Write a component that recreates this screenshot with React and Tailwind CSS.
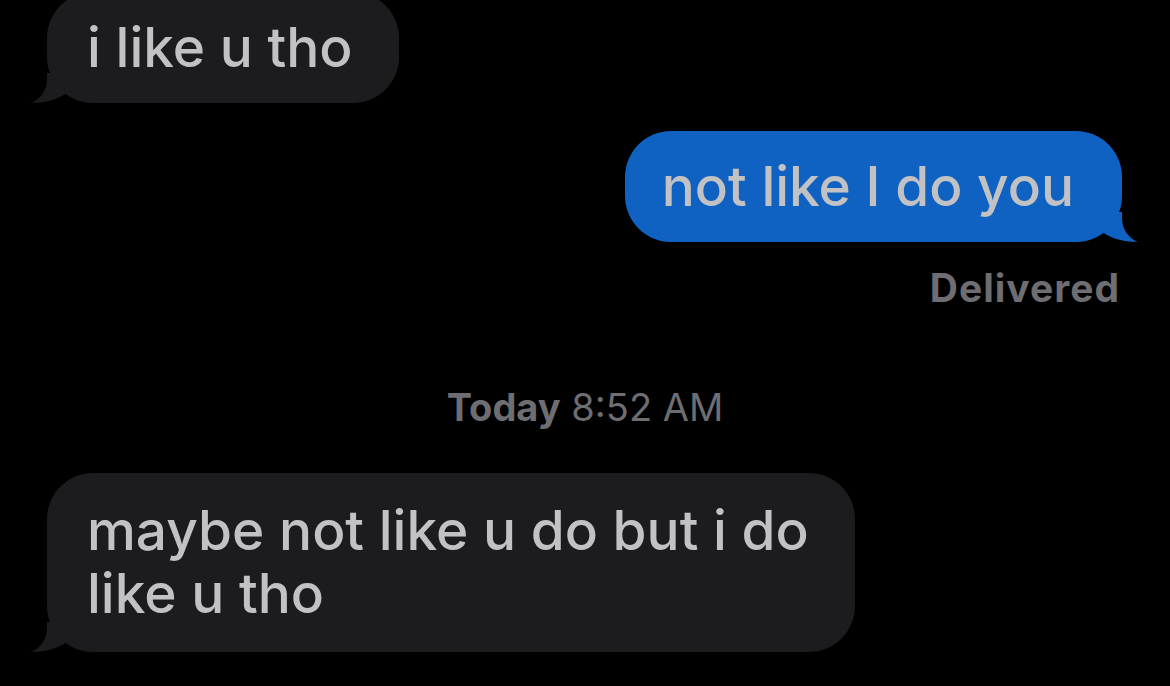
import React from 'react'

function Tail({ color, flip }) {
  return (
    <svg
      className={`absolute bottom-0 h-[30px] w-[40px] ${flip ? 'right-[-16px] scale-x-[-1]' : 'left-[-16px]'}`}
      viewBox="0 0 40 30"
    >
      <path d="M16 0 L16 6 C16 18 9 26 0.5 29.8 C12 30.2 26 27 35 20.5 L35 0 Z" fill={color} />
    </svg>
  )
}

function Bubble({ children, mine, className = '' }) {
  const color = mine ? '#0f62c2' : '#1c1c1e'
  return (
    <div
      className={`relative rounded-[46px] text-[55px] font-medium leading-[63px] text-[#c2c2c4] ${mine ? 'bg-[#0f62c2]' : 'bg-[#1c1c1e]'} ${className}`}
    >
      {children}
      <Tail color={color} flip={mine} />
    </div>
  )
}

export default function App() {
  return (
    <div className="h-[686px] w-[1170px] overflow-hidden bg-black font-['Inter','Liberation_Sans',sans-serif]">
      <div className="mt-[-8px] flex pl-[47px]">
        <Bubble className="flex h-[111px] items-center pl-[40px] pr-[46px]">i like u tho</Bubble>
      </div>

      <div className="mt-[28px] flex justify-end pr-[48px]">
        <Bubble mine className="flex h-[111px] items-center pl-[37px] pr-[48px]">not like I do you</Bubble>
      </div>

      <div className="mt-[22px] pr-[50px] text-right text-[39px] font-bold leading-[48px] tracking-[1px] text-[#6e6e72]">
        Delivered
      </div>

      <div className="mt-[72px] text-center text-[38px] leading-[46px] text-[#6e6e72]">
        <span className="font-bold">Today</span> 8:52 AM
      </div>

      <div className="mt-[43px] flex pl-[47px]">
        <Bubble className="w-[808px] px-[40px] pb-[27px] pt-[26px]">maybe not like u do but i do like u tho</Bubble>
      </div>
    </div>
  )
}
